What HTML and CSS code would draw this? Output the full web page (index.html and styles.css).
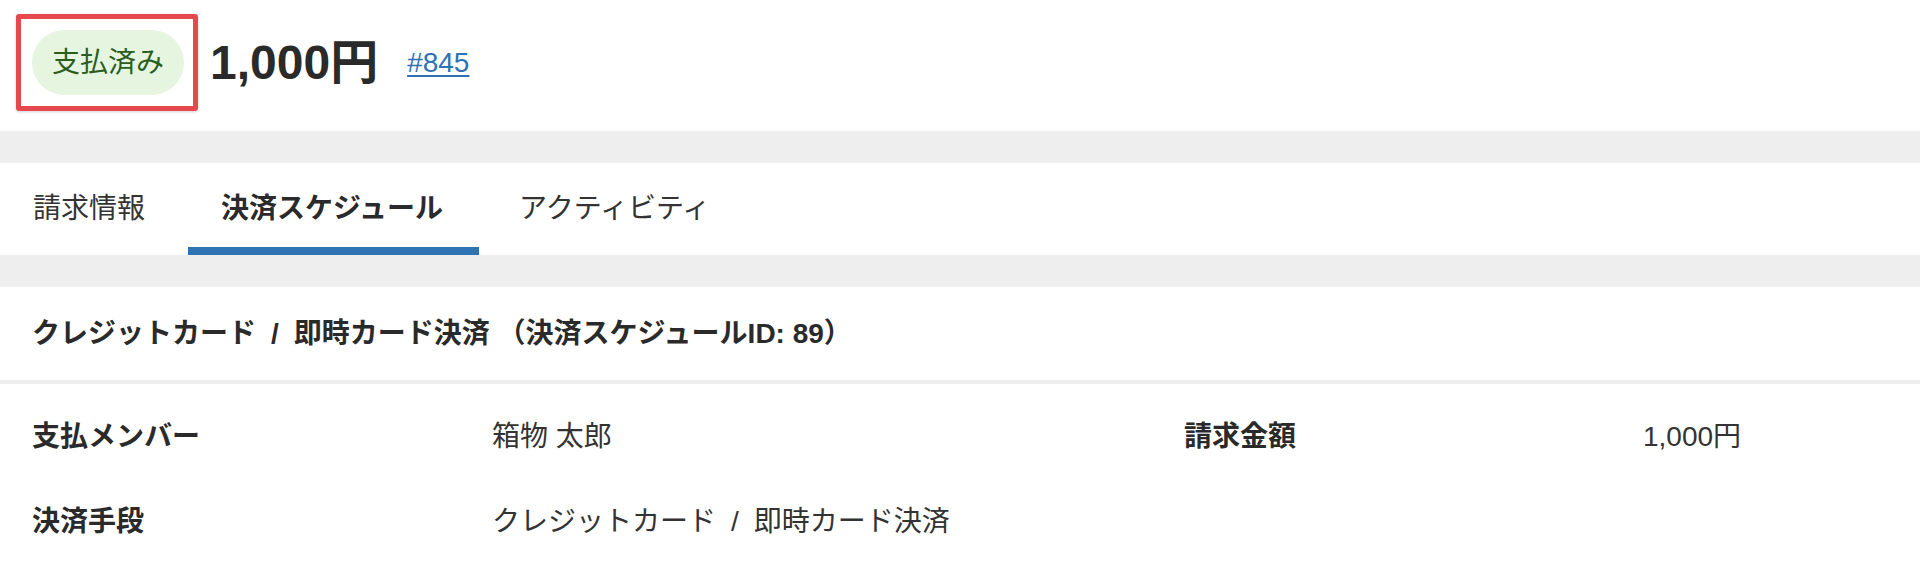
FILE: index.html
```html
<!DOCTYPE html>
<html lang="ja">
<head>
<meta charset="utf-8">
<title>決済スケジュール</title>
<link rel="stylesheet" href="styles.css">
</head>
<body>
<div class="page">
  <header class="summary">
    <div class="highlight"><span class="status">支払済み</span></div>
    <span class="amount">1,000円</span>
    <a class="invoice-link" href="#">#845</a>
  </header>
  <div class="band"></div>
  <nav class="tabs">
    <a class="tab" href="#">請求情報</a>
    <a class="tab tab-active" href="#">決済スケジュール</a>
    <a class="tab" href="#">アクティビティ</a>
  </nav>
  <div class="band"></div>
  <section class="card">
    <h2 class="card-title">クレジットカード<span class="sep">/</span>即時カード決済 （決済スケジュールID: 89）</h2>
    <dl class="details">
      <dt class="label">支払メンバー</dt>
      <dd class="value">箱物 太郎</dd>
      <dt class="label">請求金額</dt>
      <dd class="value">1,000円</dd>
      <dt class="label">決済手段</dt>
      <dd class="value">クレジットカード<span class="sep">/</span>即時カード決済</dd>
    </dl>
  </section>
</div>
</body>
</html>
```

FILE: styles.css
```css
html, body {
  margin: 0;
  padding: 0;
  background: #ffffff;
}

body {
  font-family: "Liberation Sans", "Noto Sans CJK JP", sans-serif;
  color: #333333;
}

.page {
  width: 100%;
}

/* Summary header */
.summary {
  display: flex;
  align-items: center;
  padding: 14px 16px 20px;
}

.highlight {
  border: 5px solid #e5484d;
  border-radius: 3px;
  padding: 11px 9px 11px 11px;
  box-shadow: 0 1px 3px rgba(0, 0, 0, 0.18);
  display: flex;
}

.status {
  display: inline-block;
  background: #e5f5e0;
  color: #2c5c1e;
  font-size: 28px;
  line-height: 43px;
  padding: 11px 20px;
  border-radius: 33px;
  white-space: nowrap;
}

.amount {
  margin-left: 12px;
  font-size: 48px;
  font-weight: 700;
  line-height: 1;
  color: #2a2a2a;
  white-space: nowrap;
}

.invoice-link {
  margin-left: 29px;
  font-size: 28px;
  color: #2f72b5;
  text-decoration: underline;
  text-underline-offset: 3px;
  text-decoration-thickness: 2px;
}

/* Gray separators */
.band {
  height: 32px;
  background: #eeeeee;
}

/* Tabs */
.tabs {
  display: flex;
  gap: 7px;
  background: #ffffff;
}

.tab {
  display: block;
  padding: 25px 36px 17px 33px;
  font-size: 28px;
  line-height: 42px;
  color: #333333;
  text-decoration: none;
  border-bottom: 8px solid transparent;
  white-space: nowrap;
}

.tab-active {
  font-weight: 700;
  color: #2a2a2a;
  border-bottom-color: #3073b3;
}

/* Card */
.card {
  background: #ffffff;
}

.card-title {
  margin: 0;
  padding: 26px 32px 25px;
  font-size: 28px;
  line-height: 42px;
  font-weight: 700;
  color: #2a2a2a;
  border-bottom: 4px solid #eeeeee;
  white-space: nowrap;
}

.sep {
  margin: 0 15px;
}

.details {
  margin: 0;
  padding: 11px 32px 0;
  display: grid;
  grid-template-columns: 460px 692px 459px 1fr;
}

.label,
.value {
  margin: 0;
  font-size: 28px;
  line-height: 42px;
  padding: 21px 0 22px;
  white-space: nowrap;
}

.label {
  font-weight: 700;
  color: #2a2a2a;
}

.value {
  color: #333333;
}
```
